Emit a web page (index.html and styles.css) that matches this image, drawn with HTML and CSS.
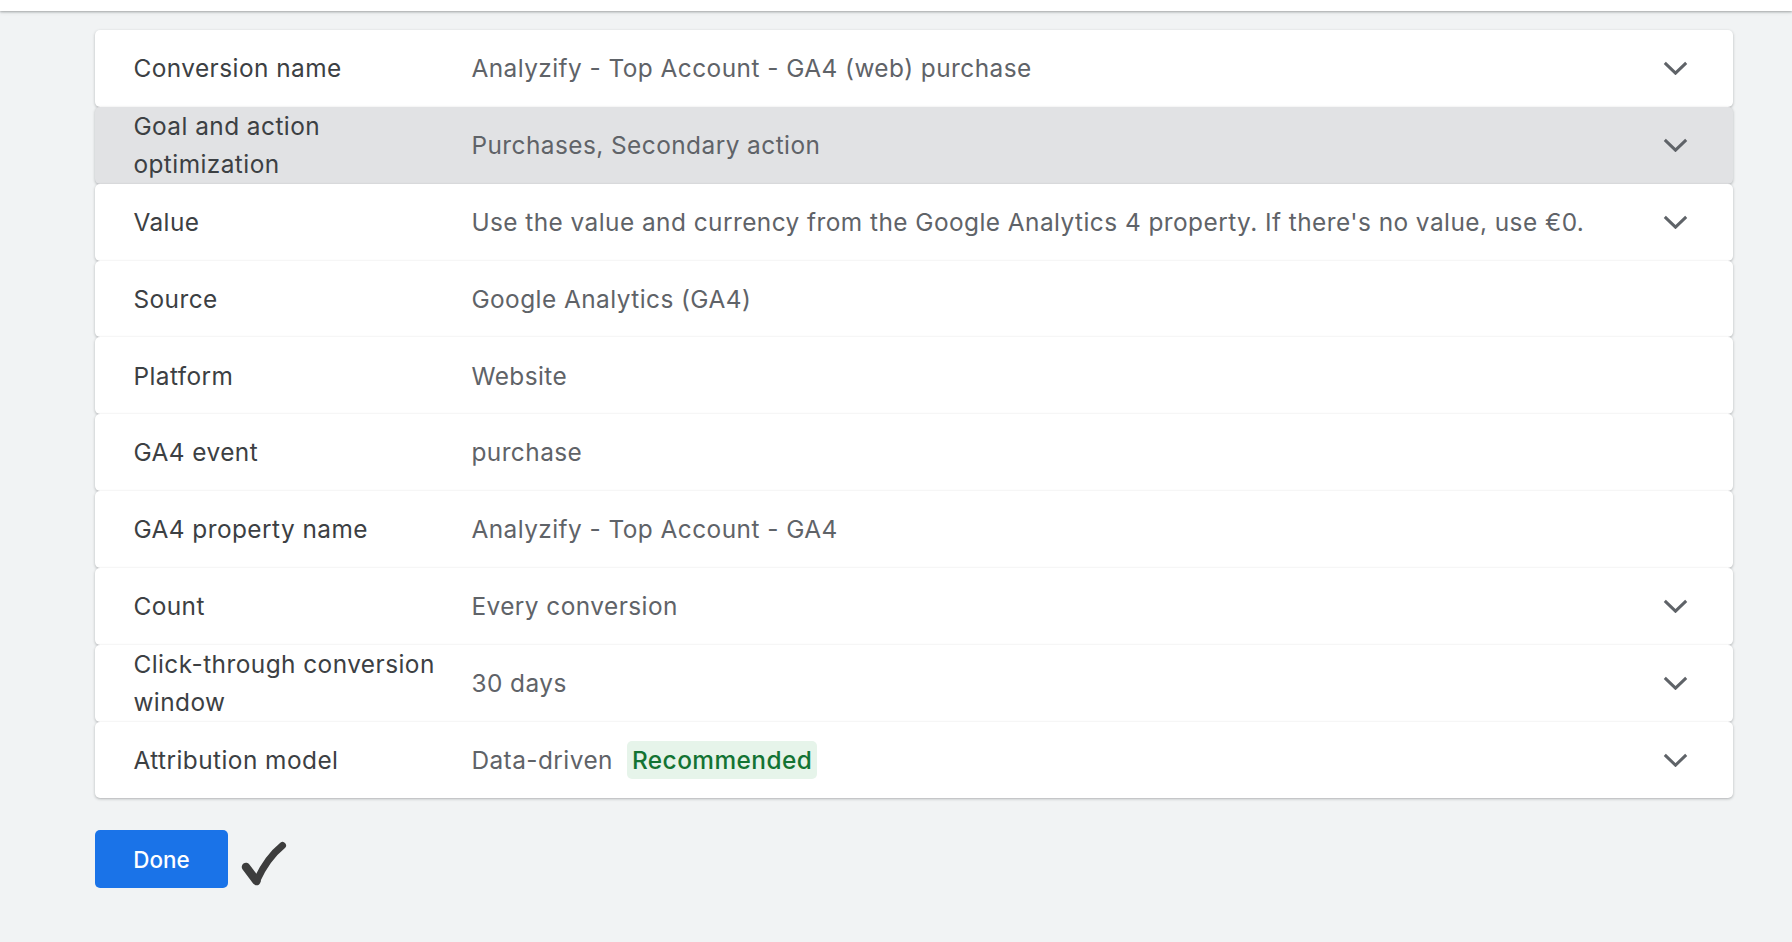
FILE: index.html
```html
<!DOCTYPE html>
<html lang="en">
<head>
<meta charset="utf-8">
<title>Conversion action settings</title>
<link rel="stylesheet" href="styles.css">
</head>
<body>
<header class="topbar"></header>
<main class="content">
  <section class="panels">
    <div class="panel">
      <div class="label">Conversion name</div>
      <div class="value">Analyzify - Top Account - GA4 (web) purchase</div>
      <svg class="chev" viewBox="0 0 25 14"><polyline points="1.8,1.8 12.5,12.2 23.2,1.8"/></svg>
    </div>
    <div class="panel hover">
      <div class="label">Goal and action optimization</div>
      <div class="value">Purchases, Secondary action</div>
      <svg class="chev" viewBox="0 0 25 14"><polyline points="1.8,1.8 12.5,12.2 23.2,1.8"/></svg>
    </div>
    <div class="panel">
      <div class="label">Value</div>
      <div class="value">Use the value and currency from the Google Analytics 4 property. If there's no value, use €0.</div>
      <svg class="chev" viewBox="0 0 25 14"><polyline points="1.8,1.8 12.5,12.2 23.2,1.8"/></svg>
    </div>
    <div class="panel">
      <div class="label">Source</div>
      <div class="value">Google Analytics (GA4)</div>
      <span class="chev-space"></span>
    </div>
    <div class="panel">
      <div class="label">Platform</div>
      <div class="value">Website</div>
      <span class="chev-space"></span>
    </div>
    <div class="panel">
      <div class="label">GA4 event</div>
      <div class="value">purchase</div>
      <span class="chev-space"></span>
    </div>
    <div class="panel">
      <div class="label">GA4 property name</div>
      <div class="value">Analyzify - Top Account - GA4</div>
      <span class="chev-space"></span>
    </div>
    <div class="panel">
      <div class="label">Count</div>
      <div class="value">Every conversion</div>
      <svg class="chev" viewBox="0 0 25 14"><polyline points="1.8,1.8 12.5,12.2 23.2,1.8"/></svg>
    </div>
    <div class="panel">
      <div class="label">Click-through conversion window</div>
      <div class="value">30 days</div>
      <svg class="chev" viewBox="0 0 25 14"><polyline points="1.8,1.8 12.5,12.2 23.2,1.8"/></svg>
    </div>
    <div class="panel">
      <div class="label">Attribution model</div>
      <div class="value">Data-driven <span class="badge">Recommended</span></div>
      <svg class="chev" viewBox="0 0 25 14"><polyline points="1.8,1.8 12.5,12.2 23.2,1.8"/></svg>
    </div>
  </section>
  <div class="actions">
    <button class="done" type="button">Done</button>
    <svg class="check" viewBox="0 0 48 46">
      <path class="check-left" d="M6 26 L16.5 40"/>
      <path class="check-right" d="M16.5 40 Q27 17 42.5 4.5"/>
    </svg>
  </div>
</main>
</body>
</html>
```

FILE: styles.css
```css
* { box-sizing: border-box; }

html, body {
  margin: 0;
  padding: 0;
  background: #f1f3f4;
  font-family: Inter, Roboto, "Liberation Sans", sans-serif;
}

.topbar {
  height: 11px;
  background: #ffffff;
  box-shadow: 0 1px 2px rgba(60, 64, 67, 0.35), 0 1px 4px rgba(60, 64, 67, 0.15);
  position: relative;
  z-index: 2;
}

.content {
  padding: 19px 59px 0 95px;
}

.panels {
  display: flex;
  flex-direction: column;
}

.panel {
  display: flex;
  align-items: center;
  min-height: 76.85px;
  padding-left: 38.4px;
  padding-right: 45px;
  background: #ffffff;
  border-radius: 5px;
  box-shadow: 0 1px 2px rgba(60, 64, 67, 0.25), 0 1px 3px 1px rgba(60, 64, 67, 0.08);
  position: relative;
}

.panel.hover {
  background: #e1e2e4;
}

.label {
  flex: 0 0 320px;
  margin-right: 18px;
  font-size: 24.4px;
  line-height: 38.4px;
  color: #3c4043;
  letter-spacing: 0.45px;
}

.value {
  flex: 1 1 auto;
  font-size: 24.4px;
  line-height: 38.4px;
  color: #5f6368;
  letter-spacing: 0.45px;
  display: flex;
  align-items: center;
}

.badge {
  margin-left: 14px;
  padding: 0 5px;
  height: 38px;
  line-height: 38px;
  border-radius: 5px;
  background: #e6f4ea;
  color: #137333;
  font-weight: 500;
}

.chev {
  flex: 0 0 25px;
  width: 25px;
  height: 14px;
}

.chev polyline {
  fill: none;
  stroke: #5f6368;
  stroke-width: 3;
}

.chev-space {
  flex: 0 0 25px;
}

.actions {
  display: flex;
  align-items: flex-start;
  margin-top: 32px;
}

.done {
  width: 133px;
  height: 58px;
  border: none;
  border-radius: 5px;
  background: #1a73e8;
  color: #ffffff;
  font-family: Inter, Roboto, "Liberation Sans", sans-serif;
  font-size: 22.4px;
  font-weight: 500;
  padding: 0;
}

.check {
  width: 48px;
  height: 46px;
  margin-left: 12px;
  margin-top: 11px;
}

.check path {
  fill: none;
  stroke: #3d3d3d;
  stroke-linecap: round;
  stroke-linejoin: round;
}

.check-left { stroke-width: 8.5; }
.check-right { stroke-width: 7; }
```
